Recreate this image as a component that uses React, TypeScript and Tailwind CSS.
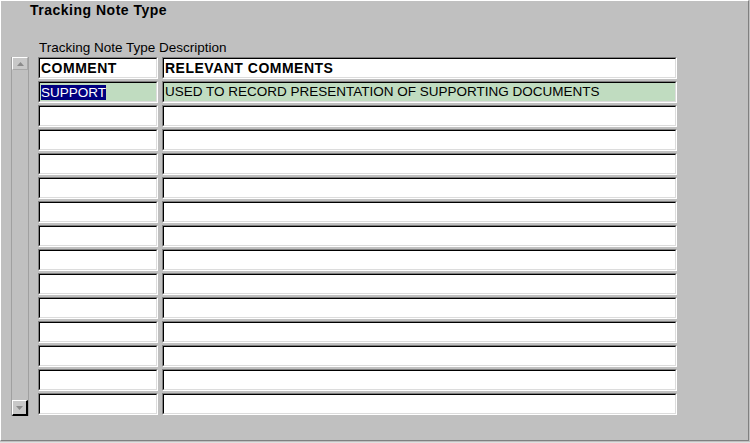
import React from 'react';

const rows = [
  { code: 'COMMENT', desc: 'RELEVANT COMMENTS', head: true },
  { code: 'SUPPORT', desc: 'USED TO RECORD PRESENTATION OF SUPPORTING DOCUMENTS', current: true },
  ...Array.from({ length: 13 }, () => ({ code: '', desc: '' })),
];

function Field({ width, bg, children }: { width: string; bg: string; children?: React.ReactNode }) {
  return (
    <div className={`${width} h-[22px] border-t border-l border-[#808080] border-r border-b border-r-white border-b-white`}>
      <div className={`h-full border-t border-l border-black border-r border-b border-r-[#dcdcdc] border-b-[#dcdcdc] ${bg} flex items-center px-[1px] overflow-hidden whitespace-nowrap`}>
        {children}
      </div>
    </div>
  );
}

export default function App() {
  return (
    <div className="w-[750px] h-[443px] bg-[#c0c0c0] text-black font-['Liberation_Sans',Arial,sans-serif] overflow-hidden">
      <div className="w-[749px] h-[441px] border-l border-t border-white border-r border-b border-r-[#808080] border-b-[#808080]">
        <div className="pl-[29px] pt-[1px] text-[14px] tracking-[0.5px] font-bold leading-[16px]">Tracking Note Type</div>

        <div className="pl-[38px] pt-[23px] text-[13.5px] leading-[14px]">Tracking Note Type Description</div>

        <div className="flex pt-[2px]">
          {/* scrollbar */}
          <div className="ml-[10px] w-[18px] h-[359px] flex flex-col border-l border-r border-[#a0a0a0] bg-[#c0c0c0]">
            <div className="h-[13px] border-t border-l border-white border-r border-b border-r-[#a8a8a8] border-b-[#a8a8a8] bg-[#c8c8c8] flex items-center justify-center">
              <svg width="7" height="4" viewBox="0 0 7 4"><polygon points="3.5,0 7,4 0,4" fill="#8a8a8a" /></svg>
            </div>
            <div className="flex-1" />
            <div className="h-[16px] border-t border-l border-white border-r-2 border-b-2 border-r-black border-b-black bg-[#c8c8c8] flex items-center justify-center">
              <svg width="7" height="4" viewBox="0 0 7 4"><polygon points="0,0 7,0 3.5,4" fill="#8a8a8a" /></svg>
            </div>
          </div>

          {/* block */}
          <div className="ml-[9px] flex flex-col gap-[2px] text-[13.5px]">
            {rows.map((r, i) => (
              <div key={i} className="flex gap-[4px]">
                <Field width="w-[120px]" bg={r.current ? 'bg-[#c0dcc0]' : 'bg-white'}>
                  {r.current ? (
                    <span className="bg-[#000080] text-white leading-[15px]">{r.code}</span>
                  ) : (
                    <span className={r.head ? 'font-bold text-[14px] tracking-[0.5px]' : ''}>{r.code}</span>
                  )}
                </Field>
                <Field width="w-[515px]" bg={r.current ? 'bg-[#c0dcc0]' : 'bg-white'}>
                  <span className={r.head ? 'font-bold text-[14px] tracking-[0.5px]' : ''}>{r.desc}</span>
                </Field>
              </div>
            ))}
          </div>
        </div>
      </div>
      <div className="h-[1px] mt-[1px] bg-[#e0e0e0]" />
    </div>
  );
}
